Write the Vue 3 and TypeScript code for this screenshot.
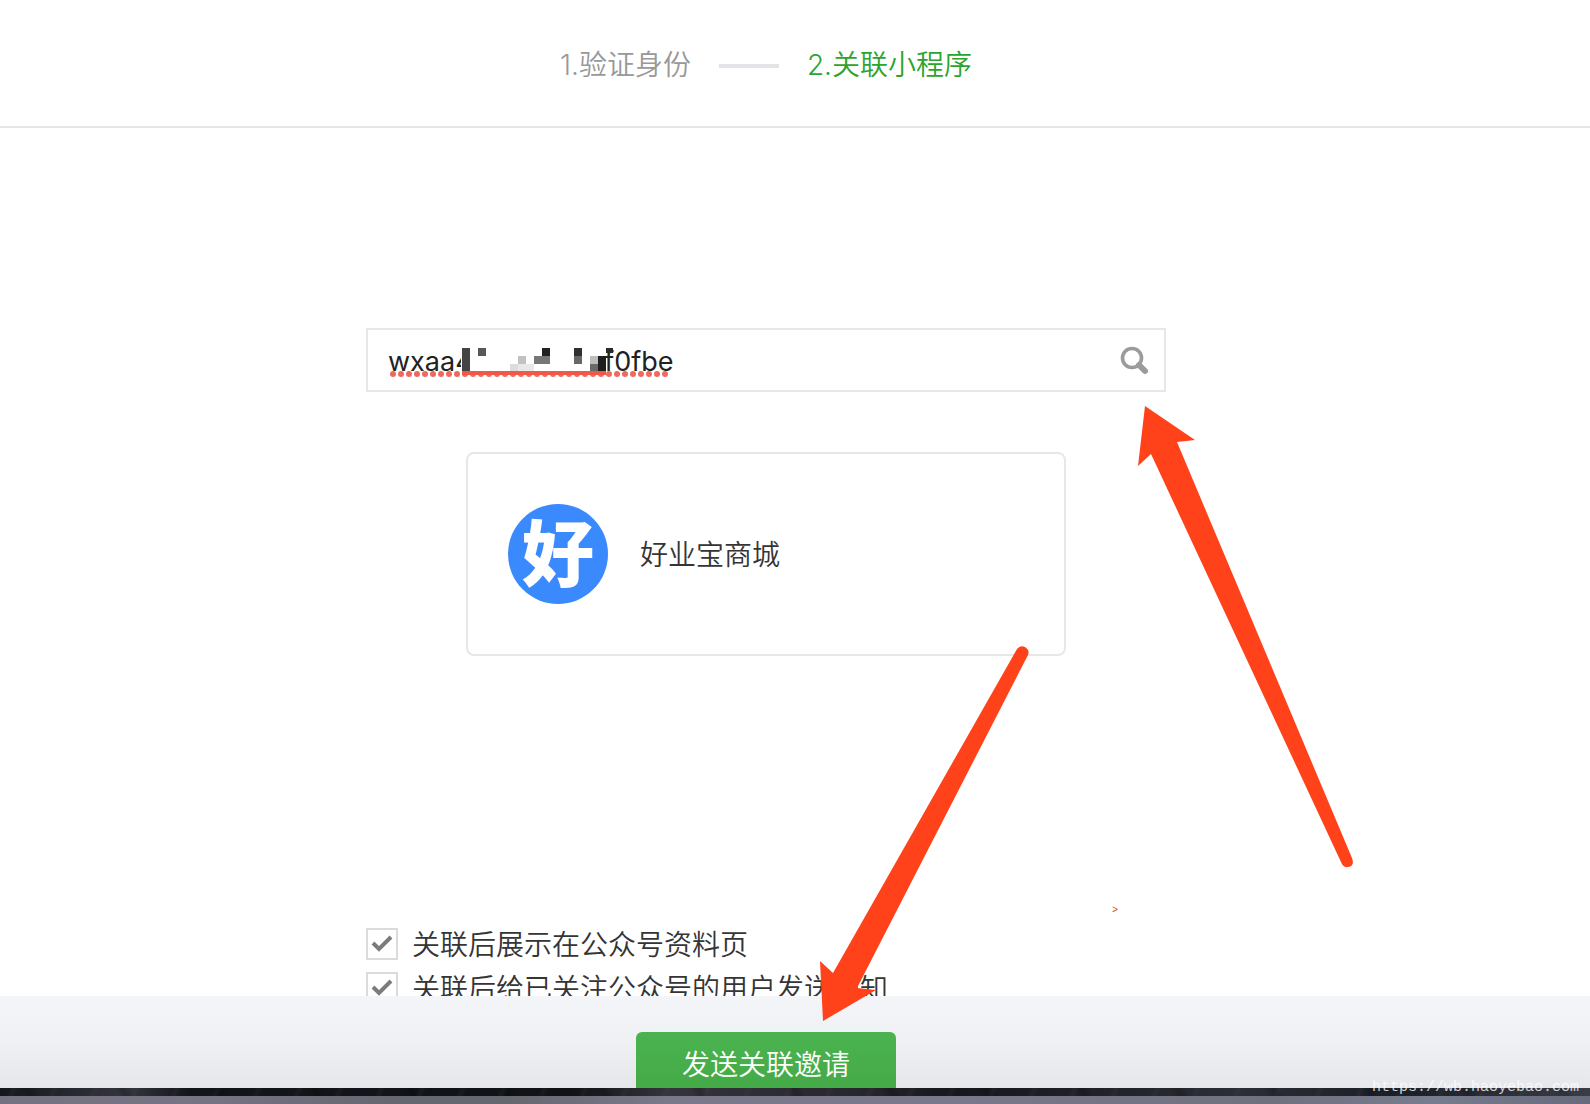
<script setup lang="ts">
import { ref } from 'vue'

interface Cell {
  x: number
  y: number
  w: number
  h: number
  fill: string
}

const appId = ref('wxaa4' + '\u2007'.repeat(7) + '\u2004' + 'f0fbe')
const showOnProfile = ref(true)
const notifyFollowers = ref(true)

// Masked part of the app id, on an 8px grid
const cells: Cell[] = [
  { x: 1, y: 0, w: 8, h: 24, fill: '#444' },
  { x: 17, y: 0, w: 8, h: 8, fill: '#585858' },
  { x: 81, y: 0, w: 8, h: 8, fill: '#222' },
  { x: 73, y: 8, w: 16, h: 8, fill: '#777' },
  { x: 57, y: 8, w: 8, h: 8, fill: '#c2c2c2' },
  { x: 49, y: 16, w: 8, h: 8, fill: '#dcdcdc' },
  { x: 57, y: 16, w: 16, h: 8, fill: '#e8e8e8' },
  { x: 113, y: 0, w: 8, h: 8, fill: '#303030' },
  { x: 113, y: 8, w: 8, h: 8, fill: '#686868' },
  { x: 129, y: 8, w: 8, h: 8, fill: '#bdbdbd' },
  { x: 129, y: 16, w: 8, h: 8, fill: '#6a6a6a' },
  { x: 137, y: 8, w: 8, h: 16, fill: '#1e1e1e' },
  { x: 145, y: 0, w: 7, h: 5, fill: '#2a2a2a' },
]
</script>

<template>
  <div class="page">
    <header class="steps">
      <span class="step">1.验证身份</span>
      <span class="step-line"></span>
      <span class="step step-active">2.关联小程序</span>
    </header>

    <main class="content">
      <div class="column">
        <form class="search" @submit.prevent>
          <input v-model="appId" class="search-input" type="text" aria-label="AppID" spellcheck="false" />
          <button class="search-button" type="submit" aria-label="搜索">
            <svg width="32" height="32" viewBox="0 0 32 32" fill="none" stroke="#999b9d">
              <circle cx="13" cy="13" r="9.5" stroke-width="3.6" />
              <path d="M20 20L26 26" stroke-width="6" stroke-linecap="round" />
            </svg>
          </button>
          <svg class="mask" width="153" height="24" viewBox="0 0 153 24" aria-hidden="true">
            <rect width="144" height="24" fill="#fff" />
            <rect v-for="(c, i) in cells" :key="i" :x="c.x" :y="c.y" :width="c.w" :height="c.h" :fill="c.fill" />
          </svg>
          <svg class="squiggle" width="280" height="6" viewBox="0 0 280 6" aria-hidden="true">
            <circle v-for="n in 35" :key="n" :cx="n * 8 - 5" cy="3" r="3" fill="#ee6a5f" />
            <rect x="72" y="0" width="144" height="4" fill="#f0594a" />
          </svg>
        </form>

        <section class="card">
          <span class="logo">好</span>
          <span class="name">好业宝商城</span>
        </section>

        <div class="options">
          <label class="option"><input v-model="showOnProfile" type="checkbox" /><span>关联后展示在公众号资料页</span></label>
          <label class="option"><input v-model="notifyFollowers" type="checkbox" /><span>关联后给已关注公众号的用户发送通知</span></label>
        </div>
      </div>
    </main>

    <footer class="footer">
      <button class="send" type="button">发送关联邀请</button>
    </footer>
    <div class="photo"></div>
    <div class="dock"></div>

    <svg class="arrows" width="1590" height="1104" viewBox="0 0 1590 1104" fill="#ff421a" aria-hidden="true">
      <path d="M1145 406L1195 440L1177 442L1352 858Q1355 866 1348 867Q1343 868 1341 862L1151 454L1138 466Z" />
      <path d="M823 1021L820 961L833 973L1017 649Q1020 645 1025 647Q1030 650 1028 655L857 988L876 990Z" />
    </svg>
    <span class="marker">&gt;</span>
    <span class="watermark">https://wb.haoyebao.com</span>
  </div>
</template>

<style>
body {
  margin: 0;
}
</style>

<style scoped>
.page {
  position: relative;
  display: flex;
  flex-direction: column;
  height: 100vh;
  overflow: hidden;
  background: #fff;
  color: #353535;
  font-family: Inter, "Noto Sans CJK SC", sans-serif;
  font-size: 28px;
  font-weight: 350;
  line-height: 44px;
}

input,
button {
  box-sizing: border-box;
  margin: 0;
  font: inherit;
}

.steps {
  display: flex;
  flex: none;
  align-items: center;
  justify-content: center;
  gap: 28px;
  box-sizing: border-box;
  height: 128px;
  padding: 4px 58px 0 0;
  border-bottom: 2px solid #e4e5e7;
}

.step {
  color: #989898;
}

.step-active {
  color: #2ba42d;
}

.step-line {
  width: 60px;
  height: 4px;
  margin-top: 2px;
  background: #e2e4e7;
}

.content {
  flex: 1;
  min-height: 0;
  padding: 200px 58px 0 0;
  overflow: hidden;
}

.column {
  max-width: 800px;
  margin: 0 auto;
}

.search {
  position: relative;
  display: flex;
  box-sizing: border-box;
  height: 64px;
  border: 2px solid #e7e7e7;
}

.search-input {
  flex: 1;
  min-width: 0;
  padding: 4px 0 0 20px;
  border: 0;
  outline: 0;
  background: none;
  color: #222;
  font-size: 27px;
  font-weight: 400;
}

.search-button {
  display: flex;
  align-items: center;
  padding: 2px 13px 0 0;
  border: 0;
  background: none;
}

.mask {
  position: absolute;
  top: 18px;
  left: 93px;
}

.squiggle {
  position: absolute;
  top: 41px;
  left: 22px;
}

.card {
  display: flex;
  align-items: center;
  gap: 32px;
  box-sizing: border-box;
  height: 204px;
  margin: 60px 100px 0;
  padding: 0 40px;
  border: 2px solid #e7e7e7;
  border-radius: 8px;
}

.logo {
  width: 100px;
  height: 100px;
  border-radius: 50%;
  background: #3b8afd;
  color: #fff;
  font-size: 72px;
  font-weight: 900;
  line-height: 100px;
  text-align: center;
}

.name,
.option span {
  padding-top: 2px;
}

.options {
  margin-top: 266px;
}

.option {
  display: flex;
  align-items: center;
  gap: 14px;
  height: 44px;
  white-space: nowrap;
}

.option input {
  width: 32px;
  height: 32px;
  border: 2px solid #dadbdd;
  appearance: none;
}

.option input:checked {
  background: url("data:image/svg+xml,%3Csvg xmlns='http://www.w3.org/2000/svg' width='28' height='28' fill='none' stroke='%237c7c7c' stroke-width='4'%3E%3Cpath d='M5 13L11 19L23 7'/%3E%3C/svg%3E");
}

.footer {
  display: flex;
  flex: none;
  align-items: flex-start;
  justify-content: center;
  box-sizing: border-box;
  height: 92px;
  padding: 36px 58px 0 0;
  overflow: hidden;
  background: linear-gradient(#f4f5f9, #f0f1f5 45%, #e6e7ea);
}

.send {
  flex: none;
  width: 260px;
  height: 64px;
  padding: 2px 0 0;
  border: 0;
  border-radius: 6px;
  background: linear-gradient(#4ab34f, #44a947);
  color: #fff;
}

.photo {
  flex: none;
  height: 8px;
  background:
    repeating-linear-gradient(115deg, transparent 0 9px, #5552 13px, transparent 17px 37px),
    repeating-linear-gradient(60deg, transparent 0 19px, #0003 27px, transparent 35px 83px),
    linear-gradient(90deg, #14171c, #34363e 8%, #12151a 12%, #101216 36%, #34353c 42%, #26272d 54%, #15171c 60%, #2b2e36 78%, #1b1e25 88%, #3a3d46);
}

.dock {
  flex: none;
  height: 8px;
  background: linear-gradient(90deg, #747180, #787485 12%, #656771 25%, #666870 32%, #7a788a 42%, #7a788a 60%, #70717f 80%, #777c8e 90%, #686b7c);
}

.arrows {
  position: absolute;
  top: 0;
  left: calc(50% - 795px);
  pointer-events: none;
}

.marker {
  position: absolute;
  top: 905px;
  left: calc(50% + 317px);
  color: #c8502f;
  font: 10px/12px "Liberation Mono", monospace;
}

.watermark {
  position: absolute;
  right: 11px;
  bottom: 7px;
  color: #ffffffc8;
  font: 15px/18px "Liberation Mono", monospace;
}
</style>
